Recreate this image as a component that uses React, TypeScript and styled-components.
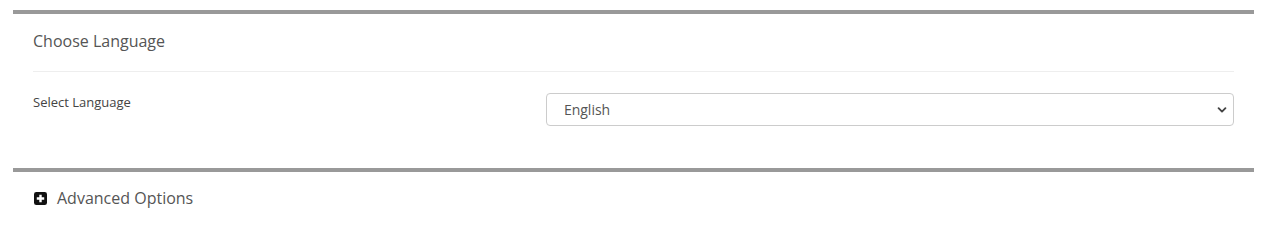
import styled, { createGlobalStyle } from 'styled-components';

const GlobalStyle = createGlobalStyle`
	body {
		margin: 0;
		background: #fff;
		font-family: 'Open Sans', 'Noto Sans', sans-serif;
	}
`;

const App = () => {
	return (
		<>
			<GlobalStyle />
			<SPage>
				<Panel>
					<PanelTitle>Choose Language</PanelTitle>
					<FormRow>
						<Label>Select Language</Label>
						<SelectWrap>
							<Select defaultValue='en'>
								<option value='en'>English</option>
							</Select>
							<Chevron viewBox='0 0 16 16'>
								<path d='M2.5 5l5.5 5.5L13.5 5' fill='none' stroke='#444' strokeWidth='3' strokeLinecap='round' strokeLinejoin='round' />
							</Chevron>
						</SelectWrap>
					</FormRow>
				</Panel>
				<Panel>
					<Toggle>
						<PlusIcon viewBox='0 0 14 14'>
							<rect x='0' y='0' width='14' height='14' rx='2.5' fill='#111' />
							<path d='M7 3v8M3 7h8' stroke='#fff' strokeWidth='2.6' />
						</PlusIcon>
						Advanced Options
					</Toggle>
				</Panel>
			</SPage>
		</>
	);
};

export default App;

const SPage = styled.div`
	padding: 10px 12px 0 13px;
`;

const Panel = styled.div`
	border-top: 4px solid #999;
	padding: 0 20px;
`;

const PanelTitle = styled.div`
	color: #555;
	font-size: 16px;
	font-weight: 500;
	line-height: 22px;
	padding: 16px 0 19px;
	border-bottom: 1px solid #eee;
`;

const FormRow = styled.div`
	display: flex;
	align-items: flex-start;
	padding: 21px 0 42px;
`;

const Label = styled.div`
	width: calc((100% + 30px) * 5 / 12 - 30px);
	margin-right: 30px;
	color: #444;
	font-size: 13px;
	font-weight: 500;
	line-height: 16px;
	padding-top: 1px;
	flex-shrink: 0;
`;

const SelectWrap = styled.div`
	position: relative;
	flex: 1;
`;

const Select = styled.select`
	appearance: none;
	width: 100%;
	height: 33px;
	box-sizing: border-box;
	border: 1px solid #ccc;
	border-radius: 4px;
	background: #fff;
	padding: 0 30px 0 17px;
	font-family: 'Open Sans', 'Noto Sans', sans-serif;
	font-size: 14px;
	color: #555;
	outline: none;
`;

const Chevron = styled.svg`
	position: absolute;
	right: 7px;
	top: 12px;
	width: 10px;
	height: 10px;
	pointer-events: none;
`;

const Toggle = styled.div`
	display: flex;
	align-items: center;
	gap: 10px;
	padding: 15px 1px;
	color: #555;
	font-size: 16px;
	font-weight: 500;
	line-height: 22px;
`;

const PlusIcon = styled.svg`
	width: 13px;
	height: 13px;
`;
